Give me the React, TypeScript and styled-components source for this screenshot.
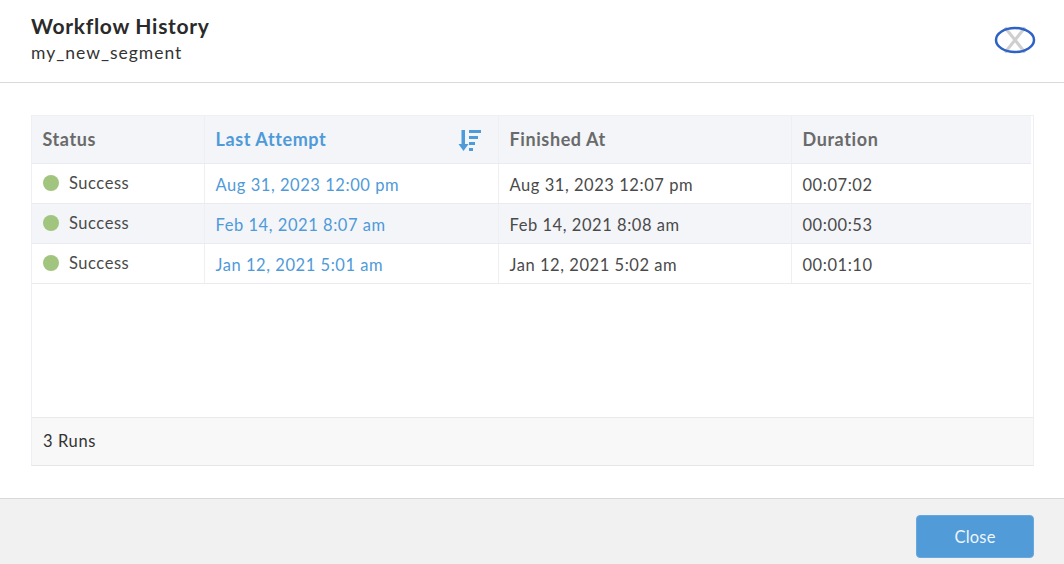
import { createGlobalStyle, styled } from 'styled-components';

const GlobalStyle = createGlobalStyle`
	html, body {
		margin: 0;
		height: 564px;
		overflow: hidden;
		background: #fff;
		font-family: Lato, 'Noto Sans', sans-serif;
	}
`;

const Modal = styled.div`
	display: flex;
	flex-direction: column;
	width: 1064px;
	height: 564px;
`;

const Header = styled.header`
	display: flex;
	justify-content: space-between;
	align-items: flex-start;
	box-sizing: border-box;
	height: 83px;
	padding: 13px 28px 0 31px;
	border-bottom: 1px solid #d9d9d9;
`;

const Title = styled.h1`
	margin: 0;
	font-size: 21px;
	line-height: 26px;
	font-weight: 700;
	letter-spacing: 0.7px;
	color: #2a2a2a;
`;

const Subtitle = styled.div`
	margin-top: 3px;
	font-size: 17.500px;
	line-height: 22px;
	letter-spacing: 1px;
	color: #333;
`;

const CloseIcon = styled.button`
	display: block;
	width: 42px;
	height: 28px;
	margin-top: 13px;
	padding: 0;
	border: 0;
	background: none;
`;

const Body = styled.main`
	flex: 1;
	padding: 32px 30px 32px 31px;
`;

const TableBox = styled.div`
	display: flex;
	flex-direction: column;
	box-sizing: border-box;
	height: 351px;
	border: 1px solid #edeff3;
	border-bottom-color: #e6e6e6;
`;

const Rows = styled.div`
	flex: 1;
`;

const Row = styled.div<{ $head?: boolean; $alt?: boolean }>`
	display: grid;
	grid-template-columns: 172px 294px 293px 240px;
	box-sizing: border-box;
	height: ${({ $head }) => ($head ? '48px' : '40px')};
	margin-right: 2px;
	border-bottom: 1px solid #e9ebf0;
	background: ${({ $head, $alt }) => ($head || $alt ? '#f3f5f9' : '#fff')};
`;

const Cell = styled.div<{ $head?: boolean; $link?: boolean; $status?: boolean }>`
	display: flex;
	align-items: center;
	justify-content: space-between;
	box-sizing: border-box;
	padding: ${({ $head, $status }) => ($head ? '0 16px 2px 10.500px' : $status ? '0 11px 1px' : '3px 10.500px 0')};
	border-left: 1px solid #edeff3;
	font-size: ${({ $head }) => ($head ? '18px' : '16.500px')};
	font-weight: ${({ $head }) => ($head ? 700 : 400)};
	letter-spacing: ${({ $head }) => ($head ? '0.6px' : '0.55px')};
	color: ${({ $link, $head }) => ($link ? '#4f9ad8' : $head ? '#6a6a6a' : '#4a4a4a')};

	&:first-child {
		border-left: 0;
	}
`;

const StatusLabel = styled.span`
	display: flex;
	align-items: center;
	gap: 10px;
`;

const StatusDot = styled.span`
	width: 16px;
	height: 16px;
	border-radius: 50%;
	background: #a1c57e;
`;

const TableFooter = styled.div`
	display: flex;
	align-items: center;
	box-sizing: border-box;
	height: 48px;
	padding: 0 0 2px 11px;
	border-top: 1px solid #e9e9e9;
	background: #f8f8f8;
	font-size: 16.500px;
	letter-spacing: 0.6px;
	color: #333;
`;

const Footer = styled.footer`
	display: flex;
	justify-content: flex-end;
	box-sizing: border-box;
	height: 66px;
	padding: 16px 30px 0 0;
	border-top: 1px solid #d9d9d9;
	background: #f1f1f1;
`;

const CloseButton = styled.button`
	width: 118px;
	height: 43px;
	border: 1px solid #69a8de;
	border-radius: 4px;
	background: #509bd8;
	color: #eef5fb;
	font-family: inherit;
	font-size: 16.500px;
	letter-spacing: 0.2px;
`;

const SortSvg = styled.svg`
	margin-top: 4px;
`;

const SortIcon = () => (
	<SortSvg width='24' height='25' viewBox='0 0 24 25' fill='#4f9ad8'>
		<rect x='3.500' y='2' width='3.500' height='17' />
		<path d='M0.500 16h10L5.500 23z' />
		<rect x='11' y='2' width='12' height='3' />
		<rect x='11' y='8' width='9' height='3' />
		<rect x='11' y='14' width='6' height='3' />
		<rect x='11' y='20' width='4' height='3' />
	</SortSvg>
);

const runs = [
	{ attempt: 'Aug 31, 2023 12:00 pm', finished: 'Aug 31, 2023 12:07 pm', duration: '00:07:02' },
	{ attempt: 'Feb 14, 2021 8:07 am', finished: 'Feb 14, 2021 8:08 am', duration: '00:00:53' },
	{ attempt: 'Jan 12, 2021 5:01 am', finished: 'Jan 12, 2021 5:02 am', duration: '00:01:10' },
];

export default function App() {
	return (
		<Modal>
			<GlobalStyle />
			<Header>
				<div>
					<Title>Workflow History</Title>
					<Subtitle>my_new_segment</Subtitle>
				</div>
				<CloseIcon aria-label='Dismiss'>
					<svg width='42' height='28' viewBox='0 0 42 28'>
						<path d='M11 1.500l20 25M31 1.500L11 26.500' stroke='#cfcfcf' strokeWidth='3' fill='none' />
						<ellipse cx='21' cy='14' rx='19' ry='12' stroke='#2e62c4' strokeWidth='2.500' fill='none' />
					</svg>
				</CloseIcon>
			</Header>
			<Body>
				<TableBox>
					<Rows>
						<Row $head>
							<Cell $head>Status</Cell>
							<Cell $head $link>
								Last Attempt
								<SortIcon />
							</Cell>
							<Cell $head>Finished At</Cell>
							<Cell $head>Duration</Cell>
						</Row>
						{runs.map((run, i) => (
							<Row key={run.attempt} $alt={i === 1}>
								<Cell $status>
									<StatusLabel>
										<StatusDot />
										Success
									</StatusLabel>
								</Cell>
								<Cell $link>{run.attempt}</Cell>
								<Cell>{run.finished}</Cell>
								<Cell>{run.duration}</Cell>
							</Row>
						))}
					</Rows>
					<TableFooter>3 Runs</TableFooter>
				</TableBox>
			</Body>
			<Footer>
				<CloseButton>Close</CloseButton>
			</Footer>
		</Modal>
	);
}
